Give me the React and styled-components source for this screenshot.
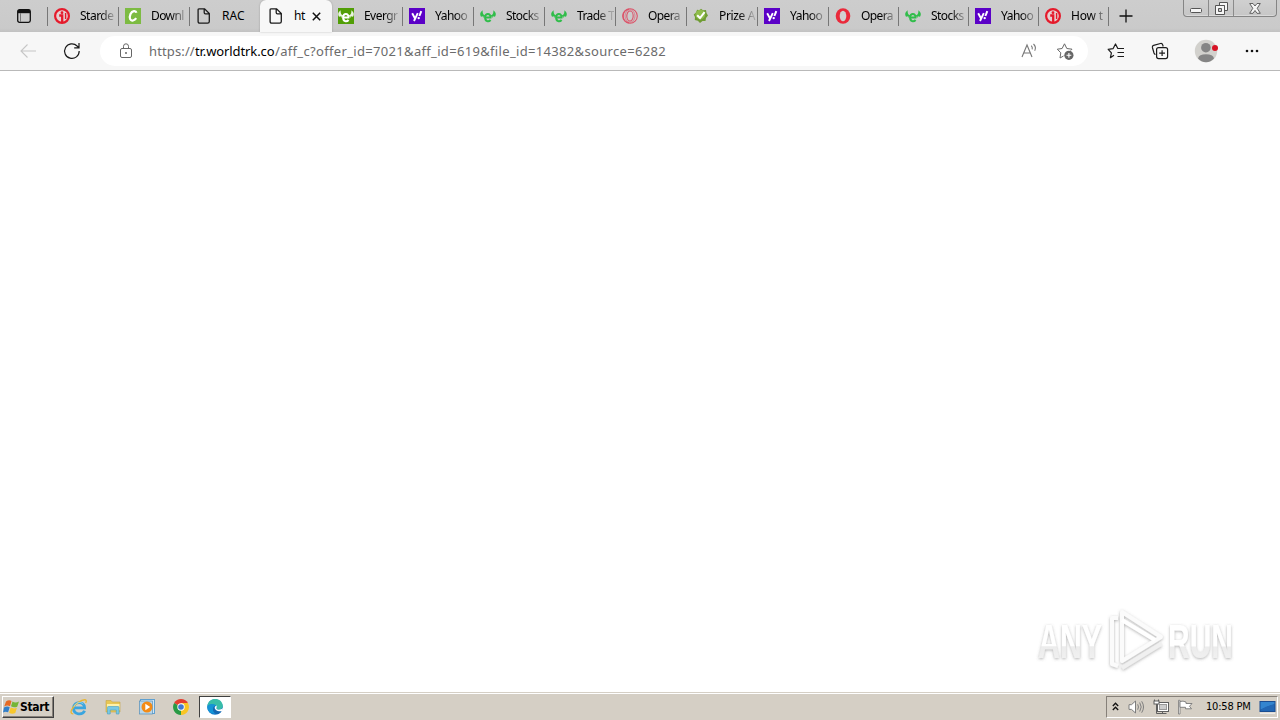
import styled, { createGlobalStyle } from 'styled-components'

const GlobalStyle = createGlobalStyle`
  * {
    box-sizing: border-box;
  }

  body {
    margin: 0;
    overflow: hidden;
    background: #fff;
    font-family: 'Noto Sans', 'Open Sans', sans-serif;
  }

  svg {
    display: block;
    flex: none;
  }
`

const Desktop = styled.div`
  display: flex;
  flex-direction: column;
  width: 1280px;
  height: 720px;
  overflow: hidden;
`

const TabStrip = styled.div`
  display: flex;
  height: 32px;
  flex: none;
  background: linear-gradient(#cdcdcd, #cacaca 88%, #c2c2c2);
`

const TabActions = styled.div`
  display: flex;
  align-items: center;
  justify-content: center;
  position: relative;
  width: 48px;
  height: 32px;

  &::after {
    content: '';
    position: absolute;
    right: 0;
    top: 7px;
    width: 1px;
    height: 19px;
    background: #777;
  }
`

const Tab = styled.div`
  display: flex;
  align-items: center;
  position: relative;
  width: ${({ $width }) => $width || 71}px;
  height: 32px;
  padding: 0 2px 0 6px;
  gap: 10px;

  &::after {
    content: '';
    display: ${({ $divider }) => ($divider ? 'block' : 'none')};
    position: absolute;
    right: 0;
    top: 7px;
    width: 1px;
    height: 19px;
    background: #777;
  }
`

const ActiveTab = styled(Tab)`
  padding: 0 0 0 8px;
  background: #f7f7f7;
  border-radius: 6px 6px 0 0;
  box-shadow: 0 0 2px rgba(0, 0, 0, 0.25);
`

const TabTitle = styled.span`
  flex: ${({ $fixed }) => ($fixed ? 'none' : 1)};
  width: ${({ $fixed }) => ($fixed ? '13px' : 'auto')};
  white-space: nowrap;
  font-size: 12px;
  line-height: 18px;
  letter-spacing: ${({ $spacing }) => $spacing || 0}px;
  color: #000;
  mask-image: ${({ $fade }) => ($fade ? 'linear-gradient(to right, #000 20px, rgba(0, 0, 0, 0.2) 34px)' : 'none')};
`

const CloseButton = styled.span`
  display: flex;
  margin-left: -5px;
`

const NewTab = styled.div`
  display: flex;
  align-items: center;
  justify-content: center;
  width: 34px;
  height: 32px;
`

const WindowButtons = styled.div`
  display: flex;
  width: 94px;
  height: 17px;
  margin-left: 40px;
  border: 1px solid #858585;
  border-top: 0;
  border-radius: 0 0 4px 4px;
  background: linear-gradient(#d0d0d0, #c6c6c6);
  box-shadow: inset 0 -1px #d9d9d9;
`

const WindowButton = styled.div`
  display: flex;
  align-items: center;
  justify-content: center;
  width: ${({ $width }) => $width}px;
  border-left: ${({ $first }) => ($first ? '0' : '1px solid #8b8b8b')};
`

const Toolbar = styled.div`
  display: flex;
  align-items: center;
  height: 39px;
  flex: none;
  background: #f7f7f7;
  border-bottom: 1px solid #b9b9b9;
`

const ToolButton = styled.div`
  display: flex;
  align-items: center;
  justify-content: center;
  width: ${({ $width }) => $width || 44}px;
  height: 38px;
`

const AddressBar = styled.div`
  display: flex;
  align-items: center;
  width: 988px;
  height: 30px;
  margin-left: 6px;
  padding: 0 14px 0 18px;
  border-radius: 15px;
  background: #fff;
`

const Url = styled.div`
  display: flex;
  flex: 1;
  margin-left: 15px;
  font-size: 13px;
  line-height: 20px;
  white-space: nowrap;
  color: #6b6b6b;
`

const UrlPart = styled.span`
  width: ${({ $width }) => $width}px;
  letter-spacing: ${({ $spacing }) => $spacing}px;
  color: ${({ $host }) => ($host ? '#000' : 'inherit')};
`

const AddressActions = styled.div`
  display: flex;
  gap: 18px;
`

const Page = styled.main`
  display: flex;
  align-items: flex-end;
  justify-content: flex-end;
  flex: 1;
  padding: 0 40px 16px 0;
  background: #fff;
`

const Taskbar = styled.footer`
  display: flex;
  align-items: center;
  height: 28px;
  flex: none;
  padding: 0 2px;
  background: #d5cfc5;
  border-top: 1px solid #d5cfc5;
  box-shadow: inset 0 1px #fff;
`

const StartButton = styled.div`
  display: flex;
  align-items: center;
  width: 52px;
  height: 22px;
  border: 1px solid;
  border-color: #fff #404040 #404040 #fff;
  box-shadow: inset -1px -1px #868079;
  font: bold 12px/20px 'DejaVu Sans Condensed', 'DejaVu Sans', sans-serif;
  letter-spacing: -0.35px;
  color: #000;
`

const QuickLaunch = styled.div`
  display: flex;
  align-items: center;
  margin-left: 8px;
`

const LaunchItem = styled.div`
  display: flex;
  align-items: center;
  justify-content: center;
  width: 34px;
  height: 22px;
`

const RunningItem = styled(LaunchItem)`
  width: 32px;
  margin-left: 1px;
  background: #fff;
  border: 1px solid;
  border-color: #404040 #fff #fff #404040;
`

const Tray = styled.div`
  display: flex;
  align-items: center;
  width: 172px;
  height: 22px;
  margin-left: auto;
  padding-left: 5px;
  border: 1px solid;
  border-color: #868079 #fff #fff #868079;
`

const TrayIcons = styled.div`
  display: flex;
  align-items: center;
  gap: 8px;
  margin-left: 9px;
`

const Clock = styled.div`
  width: 47px;
  margin-left: 13px;
  margin-right: 6px;
  font: 11px/16px 'DejaVu Sans Condensed', sans-serif;
  letter-spacing: -0.2px;
  white-space: nowrap;
  color: #000;
`

const InfoFavicon = () => (
  <svg width="16" height="16" viewBox="0 0 16 16">
    <circle cx="8" cy="8" r="6.9" fill="#e6cfd0" stroke="#e51a2b" strokeWidth="2.2" />
    <circle cx="8" cy="4.7" r="1.4" fill="#e51a2b" />
    <path d="M5.2 7.5H8.2V15" fill="none" stroke="#e51a2b" strokeWidth="2.3" />
    <path d="M11.6 5V11" stroke="#e51a2b" strokeWidth="1.4" />
  </svg>
)

const CFavicon = () => (
  <svg width="16" height="16" viewBox="0 0 16 16">
    <rect width="16" height="16" fill="#7dbb42" />
    <path d="M11.4 4.8C10.9 2.2 7.1 2.4 5.5 6C3.7 10.4 5.5 13.2 8 12.5Q10 12 11.2 10.2" fill="none" stroke="#fff" strokeWidth="2.2" />
  </svg>
)

const PageFavicon = () => (
  <svg width="16" height="16" viewBox="0 0 16 16" fill="none" stroke="#1b1b1b" strokeWidth="1.3">
    <path d="M3.5 .8H8.6L13.3 5.5V13.5Q13.3 15.2 11.6 15.2H3.8Q2.1 15.2 2.1 13.5V2Q2.1 .8 3.5 .8M8.2 1V4.6Q8.2 5.8 9.4 5.8H13" />
  </svg>
)

const EToroFavicon = ({ filled }) => (
  <svg width="16" height="16" viewBox="0 0 16 16">
    {filled && <rect width="16" height="16" fill="#519e06" />}
    <g fill={filled ? '#e8f3df' : '#30bd4a'}>
      <path d="M2.7 2.2C-.1 4.5-.4 6.6 1 8.8L3.2 8.2L3.7 10L5.3 7.5C3.4 6.8 2.3 5.3 2.7 2.2Z" />
      <path d="M13.3 2.2C16.1 4.5 16.4 6.6 15 8.8L12.8 8.2L12.3 10L10.7 7.5C12.6 6.8 13.7 5.3 13.3 2.2Z" />
    </g>
    <path d="M5.4 9.4H10.5C10.8 4.9 5.1 4.7 5.1 9.2C5.1 13.9 8.7 14.1 10.6 12" fill="none" stroke={filled ? '#fff' : '#30bd4a'} strokeWidth="2" />
  </svg>
)

const YahooFavicon = () => (
  <svg width="16" height="16" viewBox="0 0 16 16">
    <rect width="16" height="16" fill="#5b01c7" />
    <path d="M3.2 5.2L5.9 10.2M8.8 5.2L5 13" fill="none" stroke="#fff" strokeWidth="1.9" />
    <path d="M12.3 3.2L10.4 8" stroke="#fff" strokeWidth="2" />
    <circle cx="9.7" cy="10.1" r="1.2" fill="#fff" />
  </svg>
)

const OperaFavicon = ({ outline }) =>
  outline ? (
    <svg width="16" height="16" viewBox="0 0 16 16" fill="none" stroke="#dc5268" strokeWidth="1.1">
      <circle cx="8" cy="8" r="7.3" />
      <ellipse cx="8" cy="8" rx="3.2" ry="5" />
      <path d="M7 1.1A7 7 0 0 0 7 14.9" />
      <ellipse cx="8" cy="8" rx="5" ry="6.2" strokeWidth=".6" />
    </svg>
  ) : (
    <svg width="16" height="16" viewBox="0 0 16 16">
      <ellipse cx="8" cy="8" rx="7.3" ry="7.8" fill="#ea2a3b" />
      <ellipse cx="8" cy="8" rx="3.3" ry="5.3" fill="#d1d1d1" />
    </svg>
  )

const PrizeFavicon = () => (
  <svg width="16" height="16" viewBox="0 0 16 16">
    <path d="M8 .8L10 2.2L13 2.1L13.5 5L15 7.5L13 10L12.5 13L9.5 13L7 15L4.8 12.7L1.8 12L2 9L.7 6.4L3.1 4.6L4 1.8L6.5 2.2Z" fill="#6f9c33" />
    <circle cx="7.3" cy="6.6" r="4.9" fill="#8fbc4b" />
    <path d="M4.2 7.2L7 10L11.6 4.2" fill="none" stroke="#fff" strokeWidth="2" />
  </svg>
)

const CloseIcon = () => (
  <svg width="9" height="9" viewBox="0 0 9 9">
    <path d="M.8 .8L8.2 8.2M8.2 .8L.8 8.2" stroke="#111" strokeWidth="1.5" />
  </svg>
)

const LockIcon = () => (
  <svg width="16" height="16" viewBox="0 0 16 16" fill="none" stroke="#666" strokeWidth="1">
    <rect x="2.5" y="5.5" width="11" height="9" rx="1.5" />
    <path d="M5.5 5V3.3A2.5 2.5 0 0 1 10.5 3.3V5" />
    <circle cx="8" cy="10" r=".9" fill="#555" stroke="none" />
  </svg>
)

const ReadAloudIcon = () => (
  <svg width="18" height="18" viewBox="0 0 18 18" fill="none" stroke="#777" strokeWidth="1.1">
    <path d="M2 15L7 3L12 15M3.7 11H10.3" />
    <path d="M11.3 3.7Q12.7 5.2 12.2 7.3M13.5 2Q16.6 5 14.7 8.7" />
  </svg>
)

const AddFavoriteIcon = () => (
  <svg width="18" height="18" viewBox="0 0 18 18">
    <path d="M7.5 14L4 16L4.8 10.8L1.3 7.2L6.1 6.5L8.5 1.8L10.8 6.5L16 7.2L14.7 8.5" fill="none" stroke="#686868" strokeLinejoin="round" />
    <circle cx="12.9" cy="13.3" r="4.6" fill="#666" />
    <path d="M10.5 13.3H15.3M12.9 10.9V15.7" stroke="#fff" strokeWidth="1.1" />
  </svg>
)

const FavoritesIcon = () => (
  <svg width="18" height="18" viewBox="0 0 18 18" fill="none" stroke="#1c1c1c" strokeWidth="1.2" strokeLinejoin="round">
    <path d="M7 13.2L3.4 15.7L4.4 10.9L1.2 7.3L6 6.7L8.5 2L10.8 6.5H17M10.5 10.5H17M10.5 14.5H17" />
  </svg>
)

const CollectionsIcon = () => (
  <svg width="18" height="18" viewBox="0 0 18 18" fill="none" stroke="#1c1c1c" strokeWidth="1.2">
    <path d="M4.5 12.5Q3.4 12.2 3 11L1.4 5.5Q1 3.9 2.6 3.4L9.4 1.5Q11.2 1.1 11.7 2.8L12.2 4.5" />
    <rect x="5.6" y="5.6" width="11" height="11" rx="2" />
    <path d="M11.1 8.2V14M8.2 11.1H14" />
  </svg>
)

const ProfileIcon = () => (
  <svg width="24" height="24" viewBox="0 0 24 24">
    <circle cx="12" cy="12" r="11.2" fill="#d2d1cd" />
    <circle cx="11.9" cy="8.7" r="4.8" fill="#858585" />
    <path d="M4 19.5Q5 15.3 12 15.3Q19 15.3 20 19.5Q16.8 23.2 12 23.2Q7.2 23.2 4 19.5Z" fill="#858585" />
    <circle cx="21" cy="9" r="3" fill="#d71325" />
  </svg>
)

const WindowsFlag = () => (
  <svg width="17" height="16" viewBox="0 0 17 16">
    <path d="M3 2.5Q6 .4 8.5 2L7 7.2Q4.2 5.8 1.2 7.5Z" fill="#e66a23" />
    <path d="M9.5 2.5Q12.3 4.3 16 2.5L14.2 7.7Q11 9.2 8 7.3Z" fill="#75b537" />
    <path d="M1 8.5Q4 6.8 6.7 8.2L5.1 13.3Q2.6 12 0 13.4Z" fill="#327fc8" />
    <path d="M7.7 8.6Q10.8 10.1 13.9 8.8L12.3 14Q9 15.5 6.1 13.7Z" fill="#f7c72d" />
  </svg>
)

const ExplorerIcon = () => (
  <svg width="18" height="18" viewBox="0 0 18 18" fill="none">
    <path d="M14.6 12.7C12.5 17.5 3.5 17 3.5 10C3.5 3.2 14.6 2.7 14.6 9.8H5" stroke="#3aa5df" strokeWidth="2.8" />
    <path d="M3.3 15.8C-1.5 16.4 2 8.4 8.3 4.3C12.8 1.3 18 .2 15.7 5" stroke="#e8b635" strokeWidth="1.4" />
    <path d="M4.2 8.7C5 4.5 10.6 3.1 13.3 6" stroke="#9be0fa" strokeWidth=".8" />
  </svg>
)

const FolderIcon = () => (
  <svg width="18" height="18" viewBox="0 0 18 18">
    <path d="M2 2.5H7L8.3 4H16V14H2Z" fill="#e8c755" stroke="#c6a546" strokeWidth=".6" />
    <path d="M3 6H15.5V12H3Z" fill="#fff1a9" />
    <path d="M3.4 16V9.5Q3.4 8.5 4.5 8.5H14Q15 8.5 15 9.5V16H12.3V12H6.2V16Z" fill="#78c9e5" stroke="#4a9dbd" strokeWidth=".6" />
  </svg>
)

const PlayerIcon = () => (
  <svg width="18" height="18" viewBox="0 0 18 18">
    <rect x="2.5" y="1.5" width="14" height="14" fill="#d6e8f3" stroke="#5fa0d0" />
    <rect x="1.5" y="3" width="13" height="13" fill="#b9d6ea" stroke="#548fbb" strokeWidth=".7" />
    <circle cx="9" cy="9" r="5.5" fill="#f38b16" />
    <path d="M7.3 5.7V12.3L12.2 9Z" fill="#fff" />
  </svg>
)

const ChromeIcon = () => (
  <svg width="16" height="16" viewBox="0 0 16 16">
    <path d="M8 8L1.1 4A8 8 0 0 1 14.9 4Z" fill="#e43e2f" />
    <path d="M8 8L1.1 4A8 8 0 0 0 8 16L11 9Z" fill="#289a45" />
    <path d="M8 8L8 16A8 8 0 0 0 14.9 4H8Z" fill="#f9c524" />
    <circle cx="8" cy="8" r="3.7" fill="#fff" />
    <circle cx="8" cy="8" r="2.8" fill="#4179d4" />
  </svg>
)

const EdgeIcon = () => (
  <svg width="16" height="16" viewBox="0 0 16 16">
    <circle cx="8" cy="8" r="7.8" fill="#1378c8" />
    <path d="M.3 7.5C1.2-2.8 15.8-2 15.8 7.3C15.4 11.1 10.8 11.2 9.2 9.9C10.8 7.7 9 5.5 6.5 5.4C3.8 5.1 1.3 6.2.3 7.5Z" fill="#38bda8" />
    <path d="M.4 7.6C2.5 3.7 8.3 4.8 9.4 7.5C6.4 5.7 3.8 11 8.4 14.2C4.6 15.8-.2 12.1.4 7.6Z" fill="#1494d6" />
    <path d="M9.4 7.2C6.7 7 6.3 12.3 14.6 12C13.1 14.6 10.5 15.7 8.6 14.8C4.7 12.7 5.4 6 9.4 7.2Z" fill="#1567b0" />
    <path d="M9.7 6.6C10.2 8.6 8.7 9.2 9.7 10.1C11 11.1 14.2 10.7 16 9.2L15.2 12.2C10 12.9 6.7 10 8 7.4Z" fill="#fff" />
  </svg>
)

const SoundIcon = () => (
  <svg width="17" height="16" viewBox="0 0 17 16" fill="none" stroke="#7d7d7d">
    <path d="M1 5.7H3.5L7.5 2V14L3.5 10.4H1Z" fill="#fff" />
    <path d="M9.7 5.3Q11.2 8 9.7 10.7M11.7 3.5Q14.7 8 11.7 12.5M13.7 2.3Q17.3 8 13.7 13.7" />
  </svg>
)

const NetworkIcon = () => (
  <svg width="16" height="16" viewBox="0 0 16 16" fill="none" stroke="#5f5f5f">
    <rect x="4.5" y="3.5" width="11" height="9" fill="#fff" />
    <rect x="6.5" y="5.5" width="7" height="5" fill="#ccc" stroke="#999" />
    <path d="M1.5 .5V4.5H5.5V.5M3.5 4.5V14.5H13.5M9.5 13V15" />
    <rect x="1" y="2" width="5" height="3" fill="#fff" />
  </svg>
)

const ActionFlagIcon = () => (
  <svg width="16" height="16" viewBox="0 0 16 16">
    <path d="M1.5 15V1.3H3V15Z" fill="#fff" stroke="#777" strokeWidth=".8" />
    <path d="M3 2.5Q6 1.5 9 3V4.5H15L12.5 7.3L14.5 9.8H8.5V8.3H3Z" fill="#fff" stroke="#777" strokeWidth=".9" />
  </svg>
)

const DesktopIcon = () => (
  <svg width="17" height="16" viewBox="0 0 17 16">
    <rect x=".5" y="2" width="16" height="11" fill="#1b4d91" />
    <path d="M1.5 3H15.5V5.2Q7 8 1.5 10.8Z" fill="#3385cf" />
    <path d="M1.5 10.8Q8 6.4 15.5 5.2V12H1.5Z" fill="#2267b4" />
    <path d="M1 14.2H16" stroke="#f7f7f7" />
  </svg>
)

const Watermark = () => (
  <svg width="206" height="70" viewBox="0 0 206 70">
    <defs>
      <filter id="glow" x="-10%" y="-20%" width="120%" height="140%">
        <feDropShadow dx="0" dy="1" stdDeviation="1.7" floodColor="#666" floodOpacity=".5" />
      </filter>
      <linearGradient id="fade" x1="0" y1="0" x2="0" y2="1">
        <stop offset=".58" stopColor="#fff" />
        <stop offset=".6" stopColor="#ececec" />
        <stop offset="1" stopColor="#f4f4f4" />
      </linearGradient>
    </defs>
    <g filter="url(#glow)" fill="url(#fade)" fontFamily="'Liberation Sans', sans-serif" fontWeight="bold" fontSize="49">
      <text transform="translate(4 52) scale(.64 1)" textLength="100" lengthAdjust="spacingAndGlyphs">ANY</text>
      <text transform="translate(134 52) scale(.59 1)" textLength="110" lengthAdjust="spacingAndGlyphs">RUN</text>
    </g>
    <g filter="url(#glow)" fill="none" stroke="#fbfbfb" strokeWidth="4" strokeLinejoin="round">
      <path d="M84 12H78V58L84 60" />
      <path d="M88 6L127 31L88 55Z" />
      <path d="M88 14L121 34" stroke="#fff" />
      <path d="M88 62L127 38" stroke="#f0f0f0" />
    </g>
  </svg>
)

const tabsBefore = [
  { icon: <InfoFavicon />, title: 'Starde', spacing: -0.5 },
  { icon: <CFavicon />, title: 'Downl', spacing: -0.6 },
  { icon: <PageFavicon />, title: 'RAC', divider: false, spacing: 0.1, fade: false, width: 70 },
]

const tabsAfter = [
  { icon: <EToroFavicon filled />, title: 'Evergr', spacing: -0.55 },
  { icon: <YahooFavicon />, title: 'Yahoo', spacing: -0.5 },
  { icon: <EToroFavicon />, title: 'Stocks', spacing: -0.55 },
  { icon: <EToroFavicon />, title: 'Trade T', spacing: -0.6 },
  { icon: <OperaFavicon outline />, title: 'Opera', spacing: -0.6 },
  { icon: <PrizeFavicon />, title: 'Prize A', spacing: -0.35 },
  { icon: <YahooFavicon />, title: 'Yahoo', spacing: -0.5 },
  { icon: <OperaFavicon />, title: 'Opera', width: 70, spacing: -0.6 },
  { icon: <EToroFavicon />, title: 'Stocks', width: 70, spacing: -0.55 },
  { icon: <YahooFavicon />, title: 'Yahoo', width: 70, spacing: -0.5 },
  { icon: <InfoFavicon />, title: 'How t', width: 70, spacing: -0.2 },
]

const renderTab = (tab, index) => (
  <Tab key={index} $width={tab.width} $divider={tab.divider !== false}>
    {tab.icon}
    <TabTitle $spacing={tab.spacing} $fade={tab.fade !== false}>{tab.title}</TabTitle>
  </Tab>
)

const App = () => {
  return (
    <Desktop>
      <GlobalStyle />
      <TabStrip>
        <TabActions>
          <svg width="14" height="14" viewBox="0 0 14 14">
            <rect x=".7" y=".7" width="12.6" height="12.6" rx="1.8" fill="none" stroke="#111" strokeWidth="1.3" />
            <path d="M1 1H13V4.2H1Z" fill="#111" />
            <path d="M3.5 4V13" stroke="#777" />
          </svg>
        </TabActions>
        {tabsBefore.map(renderTab)}
        <ActiveTab $width={72}>
          <PageFavicon />
          <TabTitle $fixed $spacing={-0.5}>ht</TabTitle>
          <CloseButton>
            <CloseIcon />
          </CloseButton>
        </ActiveTab>
        {tabsAfter.map(renderTab)}
        <NewTab>
          <svg width="14" height="14" viewBox="0 0 14 14">
            <path d="M7 .5V13.5M.5 7H13.5" stroke="#111" strokeWidth="1.3" />
          </svg>
        </NewTab>
        <WindowButtons>
          <WindowButton $width={24} $first>
            <svg width="12" height="12" viewBox="0 0 12 12">
              <rect x=".5" y="6.5" width="11" height="4" rx="1" fill="#f5f5f5" stroke="#555" />
            </svg>
          </WindowButton>
          <WindowButton $width={25}>
            <svg width="13" height="13" viewBox="0 0 13 13" stroke="#555" fill="#f5f5f5">
              <path d="M4.5 .5H12.5V8.5H9.5V3.5H4.5Z" />
              <path d="M.5 3.5H9.5V12.5H.5ZM3.5 6.5V9.5H6.5V6.5Z" fillRule="evenodd" />
            </svg>
          </WindowButton>
          <WindowButton $width={43}>
            <svg width="12" height="11" viewBox="0 0 12 11">
              <path d="M.7 .5H4L6 3L8 .5H11.3L8.2 5.3L11.3 10.3H8L6 7.5L4 10.3H.7L3.8 5.3Z" fill="#f5f5f5" stroke="#555" strokeWidth=".9" />
            </svg>
          </WindowButton>
        </WindowButtons>
      </TabStrip>
      <Toolbar>
        <ToolButton $width={56}>
          <svg width="16" height="14" viewBox="0 0 16 14" fill="none" stroke="#c6c6c6" strokeWidth="1.1">
            <path d="M16 7H1M7.5 .5L1 7L7.5 13.5" />
          </svg>
        </ToolButton>
        <ToolButton $width={32}>
          <svg width="18" height="18" viewBox="0 0 18 18" fill="none" stroke="#191919" strokeWidth="1.2">
            <path d="M16.2 9A7.3 7.3 0 1 1 14.1 4L16 5.8M16 1V5.8H11.2" />
          </svg>
        </ToolButton>
        <ToolButton $width={6} />
        <AddressBar>
          <LockIcon />
          <Url>
            <UrlPart $width={46} $spacing={0.13}>https://</UrlPart>
            <UrlPart $width={80} $spacing={-0.1} $host>tr.worldtrk.co</UrlPart>
            <UrlPart $width={392} $spacing={0.325}>/aff_c?offer_id=7021&amp;aff_id=619&amp;file_id=14382&amp;source=6282</UrlPart>
          </Url>
          <AddressActions>
            <ReadAloudIcon />
            <AddFavoriteIcon />
          </AddressActions>
        </AddressBar>
        <ToolButton $width={56}>
          <FavoritesIcon />
        </ToolButton>
        <ToolButton $width={32}>
          <CollectionsIcon />
        </ToolButton>
        <ToolButton $width={60}>
          <ProfileIcon />
        </ToolButton>
        <ToolButton $width={32}>
          <svg width="14" height="4" viewBox="0 0 14 4" fill="#111">
            <circle cx="2" cy="2" r="1.3" />
            <circle cx="7" cy="2" r="1.3" />
            <circle cx="12" cy="2" r="1.3" />
          </svg>
        </ToolButton>
      </Toolbar>
      <Page>
        <Watermark />
      </Page>
      <Taskbar>
        <StartButton>
          <WindowsFlag />
          Start
        </StartButton>
        <QuickLaunch>
          <LaunchItem><ExplorerIcon /></LaunchItem>
          <LaunchItem><FolderIcon /></LaunchItem>
          <LaunchItem><PlayerIcon /></LaunchItem>
          <LaunchItem><ChromeIcon /></LaunchItem>
          <RunningItem><EdgeIcon /></RunningItem>
        </QuickLaunch>
        <Tray>
          <svg width="7" height="9" viewBox="0 0 7 9" fill="none" stroke="#111" strokeWidth="1.3">
            <path d="M.8 4L3.5 1.2L6.2 4M.8 8L3.5 5.2L6.2 8" />
          </svg>
          <TrayIcons>
            <SoundIcon />
            <NetworkIcon />
            <ActionFlagIcon />
          </TrayIcons>
          <Clock>10:58 PM</Clock>
          <DesktopIcon />
        </Tray>
      </Taskbar>
    </Desktop>
  )
}

export default App
